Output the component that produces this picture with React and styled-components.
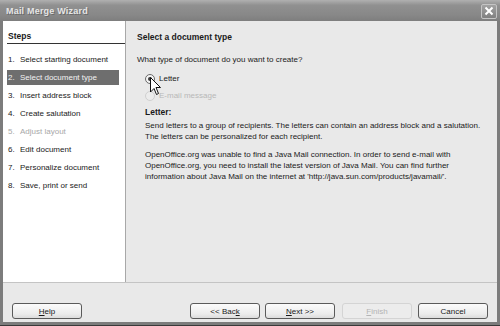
import React from "react";
import styled, { createGlobalStyle } from "styled-components";

const Global = createGlobalStyle`
  html, body { margin: 0; padding: 0; background: #6a6a6a; }
  body { width: 500px; height: 326px; overflow: hidden; }
  * { box-sizing: border-box; }
`;

const Window = styled.div`
  width: 500px;
  height: 326px;
  display: flex;
  flex-direction: column;
  background: #7c7c7c;
  font-family: "Liberation Sans", Arial, sans-serif;
  font-size: 8px;
  color: #1a1a1a;
  padding: 0 3px 3px 3px;
  border-bottom: 1px solid #3a3a3a;
  position: relative;
  white-space: nowrap;
`;

const TitleBar = styled.div`
  height: 21px;
  margin: 0 -3px;
  padding: 0 3px 0 6px;
  display: flex;
  align-items: center;
  justify-content: space-between;
  background: linear-gradient(#b0b0b0, #909090 25%, #888888 70%, #7e7e7e);
`;

const Title = styled.span`
  font-family: "Liberation Sans", Arial, sans-serif;
  font-weight: bold;
  font-size: 9px;
  color: #e6e6e6;
  letter-spacing: 0.2px;
  text-shadow: 1px 1px 0 #6a6a6a;
`;

const CloseBtn = styled.div`
  width: 16px;
  height: 15px;
  margin-top: 1px;
  border: 1px solid #c4c4c4;
  border-radius: 2px;
  background: linear-gradient(#a2a2a2, #808080);
  display: flex;
  align-items: center;
  justify-content: center;
`;

const Body = styled.div`
  flex: 1;
  display: flex;
  background: #e9e9e9;
`;

const Steps = styled.div`
  width: 123px;
  background: #ffffff;
  border-right: 1px solid #a8a8a8;
  padding: 10px 0 0 4px;
  display: flex;
  flex-direction: column;
`;

const StepsHeader = styled.div`
  font-weight: bold;
  font-size: 8.5px;
  padding: 0 0 2px 1px;
  border-bottom: 1px solid #333;
  margin-bottom: 6px;
`;

const StepItem = styled.div`
  display: flex;
  align-items: center;
  padding-left: 1px;
  margin-right: 6px;
  color: ${p => (p.$disabled ? "#a8a8a8" : p.$active ? "#f2f2f2" : "#1a1a1a")};
  background: ${p => (p.$active ? "#6e6e6e" : "transparent")};
  height: ${p => (p.$active ? "15px" : "18px")};
  margin-top: ${p => (p.$active ? "1.5px" : "0")};
  margin-bottom: ${p => (p.$active ? "1.5px" : "0")};
`;

const Num = styled.span`
  width: 12px;
  display: inline-block;
`;

const Main = styled.div`
  flex: 1;
  background: #e9e9e9;
  padding: 11px 10px 0 11px;
  display: flex;
  flex-direction: column;
`;

const Heading = styled.div`
  font-weight: bold;
  font-size: 8.5px;
  margin-bottom: 13px;
`;

const Question = styled.div`
  margin-bottom: 6px;
`;

const RadioRow = styled.label`
  display: flex;
  align-items: center;
  height: 17px;
  padding-left: 8px;
  color: ${p => (p.$disabled ? "#b8b8b8" : "#1a1a1a")};
`;

const RadioCircle = styled.span`
  width: 10px;
  height: 10px;
  border-radius: 50%;
  border: 1px solid ${p => (p.$disabled ? "#d0d0d0" : "#6a6a6a")};
  background: ${p => (p.$disabled ? "#ececec" : "#f4f4f4")};
  margin-right: 4px;
  display: flex;
  align-items: center;
  justify-content: center;
  &::after {
    content: "";
    width: 4px;
    height: 4px;
    border-radius: 50%;
    background: ${p => (p.$checked ? "#3a3a3a" : "transparent")};
  }
`;

const SubHeading = styled.div`
  font-weight: bold;
  font-size: 8.5px;
  margin: 3px 0 3px 8px;
`;

const Para = styled.p`
  margin: 0 0 7px 8px;
  line-height: 11px;
  white-space: pre;
`;

const Footer = styled.div`
  height: 40px;
  background: #e9e9e9;
  border-top: 1px solid #c4c4c4;
  display: flex;
  align-items: flex-start;
  padding: 20px 6px 0 9px;
`;

const Button = styled.div`
  width: 70px;
  height: 16px;
  border: 1px solid ${p => (p.$disabled ? "#d4d4d4" : "#5a5a5a")};
  border-radius: 3px;
  background: ${p => (p.$disabled ? "#ececec" : "linear-gradient(#fbfbfb, #ececec 70%, #dcdcdc)")};
  color: ${p => (p.$disabled ? "#b4b4b4" : "#1a1a1a")};
  display: flex;
  align-items: center;
  justify-content: center;
  margin-left: ${p => p.$ml || 0}px;
`;

const Cursor = styled.svg`
  position: absolute;
  left: 150px;
  top: 77px;
`;

const steps = [
  ["1.", "Select starting document"],
  ["2.", "Select document type", "active"],
  ["3.", "Insert address block"],
  ["4.", "Create salutation"],
  ["5.", "Adjust layout", "disabled"],
  ["6.", "Edit document"],
  ["7.", "Personalize document"],
  ["8.", "Save, print or send"],
];

export default function App() {
  return (
    <>
      <Global />
      <Window>
        <TitleBar>
          <Title>Mail Merge Wizard</Title>
          <CloseBtn>
            <svg width="10" height="10" viewBox="0 0 10 10">
              <path d="M1.5 1.5 L8.5 8.5 M8.5 1.5 L1.5 8.5" stroke="#fff" strokeWidth="2" />
            </svg>
          </CloseBtn>
        </TitleBar>
        <Body>
          <Steps>
            <StepsHeader>Steps</StepsHeader>
            {steps.map(([n, t, s]) => (
              <StepItem key={n} $active={s === "active"} $disabled={s === "disabled"}>
                <Num>{n}</Num>
                {t}
              </StepItem>
            ))}
          </Steps>
          <Main>
            <Heading>Select a document type</Heading>
            <Question>What type of document do you want to create?</Question>
            <RadioRow>
              <RadioCircle $checked />
              Letter
            </RadioRow>
            <RadioRow $disabled>
              <RadioCircle $disabled />
              E-mail message
            </RadioRow>
            <SubHeading>Letter:</SubHeading>
            <Para>
              {"Send letters to a group of recipients. The letters can contain an address block and a salutation.\nThe letters can be personalized for each recipient."}
            </Para>
            <Para>
              {"OpenOffice.org was unable to find a Java Mail connection. In order to send e-mail with\nOpenOffice.org, you need to install the latest version of Java Mail. You can find further\ninformation about Java Mail on the internet at 'http://java.sun.com/products/javamail/'."}
            </Para>
          </Main>
        </Body>
        <Footer>
          <Button><span><u>H</u>elp</span></Button>
          <Button $ml={108}><span>&lt;&lt; Bac<u>k</u></span></Button>
          <Button $ml={5}><span><u>N</u>ext &gt;&gt;</span></Button>
          <Button $disabled $ml={7}><span><u>F</u>inish</span></Button>
          <Button $ml={6}>Cancel</Button>
        </Footer>
        <Cursor width="12" height="19" viewBox="0 0 12 19">
          <path d="M0.5 0.5 L0.5 15 L4 11.5 L6.5 17.5 L8.5 16.5 L6 10.5 L10.5 10.5 Z" fill="#fff" stroke="#111" strokeWidth="1" />
        </Cursor>
      </Window>
    </>
  );
}
